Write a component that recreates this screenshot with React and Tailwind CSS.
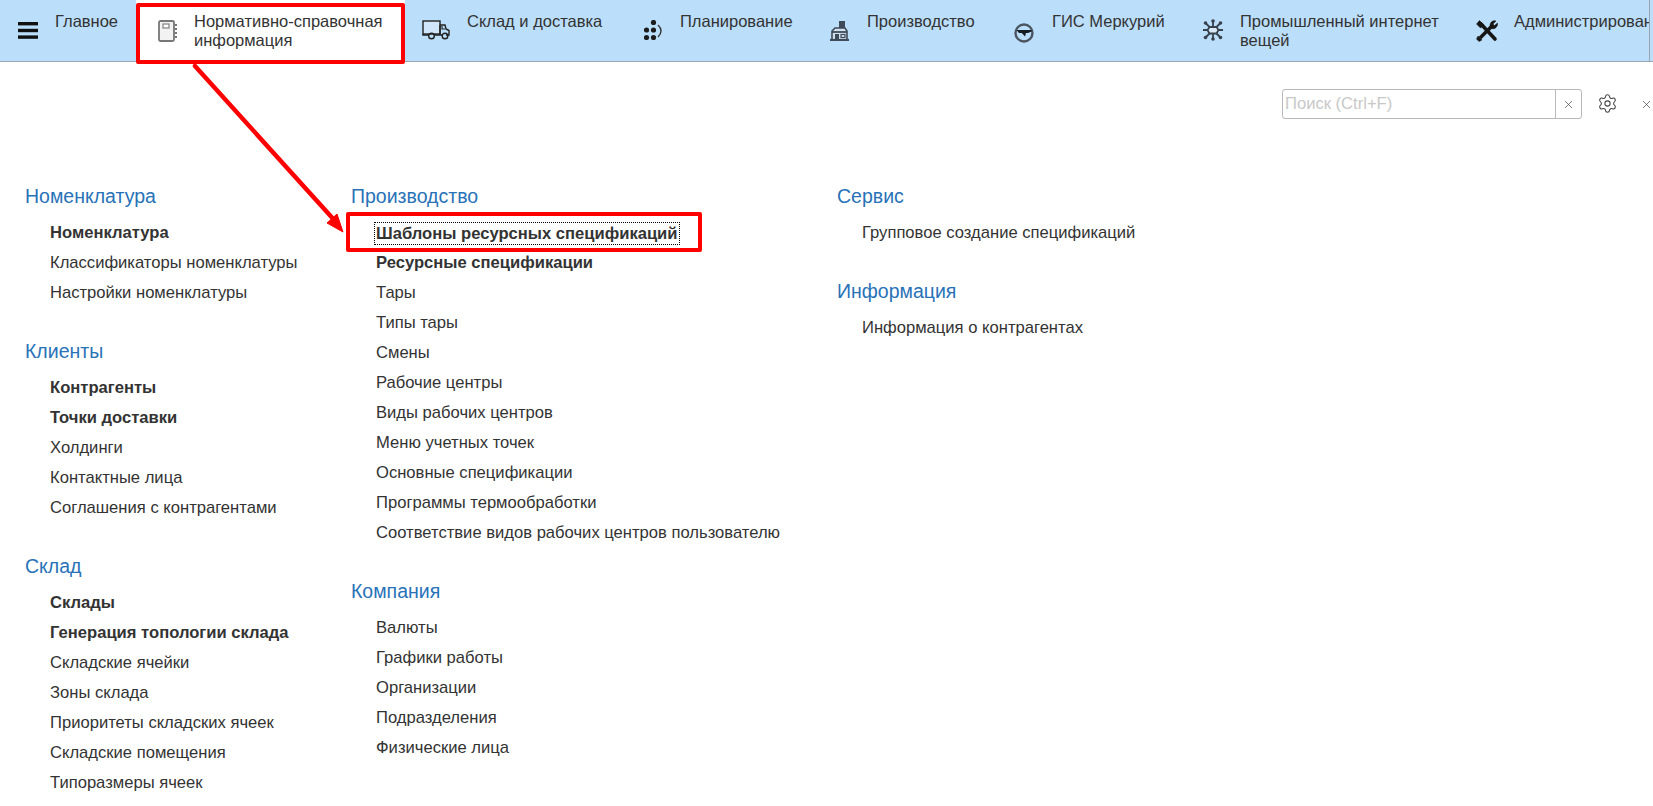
import { Settings, X } from "lucide-react";

const MenuIcon = () => (
  <svg width="20" height="17" viewBox="0 0 20 17" fill="#111">
    <rect x="0" y="0" width="20" height="3.4" />
    <rect x="0" y="6.8" width="20" height="3.4" />
    <rect x="0" y="13.4" width="20" height="3.4" />
  </svg>
);

const NotebookIcon = () => (
  <svg width="20" height="22" viewBox="0 0 20 22" fill="none">
    <rect x="1" y="1" width="15" height="20" rx="1.5" fill="#f2f2f2" stroke="#777" strokeWidth="1.8" />
    <rect x="5" y="4" width="6" height="4" fill="#fff" stroke="#888" strokeWidth="1.3" />
    <path d="M17 5h2M17 9h2M17 13h2M17 17h2" stroke="#777" strokeWidth="1.8" />
  </svg>
);

const TruckIcon = () => (
  <svg width="28" height="21" viewBox="0 0 28 21" fill="none" stroke="#222" strokeWidth="1.4">
    <rect x="1" y="1" width="17" height="13" fill="#cfe6fb" />
    <path d="M18 5h5l1 4 3 1.5V15h-3M18 5v10" />
    <path d="M20 6v3h3" strokeWidth="1.1" />
    <path d="M1 14v1h6M12 15h9" />
    <circle cx="9.5" cy="16" r="2.8" />
    <circle cx="23" cy="16" r="2.8" />
  </svg>
);

const PlanIcon = () => (
  <svg width="18" height="20" viewBox="0 0 18 20" fill="#1d1d1d">
    <circle cx="9.5" cy="2.5" r="2.6" />
    <circle cx="2.5" cy="10" r="2.6" />
    <circle cx="9.5" cy="10" r="2.6" />
    <circle cx="2.5" cy="17.5" r="2.6" />
    <circle cx="9.5" cy="17.5" r="2.6" />
    <path d="M14 5c4 3.5 4 8.5 0 12" fill="none" stroke="#333" strokeWidth="1.4" />
  </svg>
);

const FactoryIcon = () => (
  <svg width="19" height="21" viewBox="0 0 19 21" fill="none">
    <path d="M9 8V1h6v7z" fill="#3f4b58" />
    <path d="M2 11l3-3h10l2 3v9H2z" fill="#cfe0ef" stroke="#3f4b58" strokeWidth="1.6" />
    <path d="M2 12h15" stroke="#3f4b58" strokeWidth="1.8" />
    <path d="M0 20h19" stroke="#3f4b58" strokeWidth="2.2" />
    <rect x="5" y="14" width="4" height="6" fill="#3f4b58" />
    <rect x="11" y="14.5" width="4" height="3" stroke="#3f4b58" strokeWidth="1.2" />
  </svg>
);

const GisIcon = () => (
  <svg width="20" height="20" viewBox="0 0 20 20" fill="none">
    <circle cx="10" cy="10" r="8.5" stroke="#4a5560" strokeWidth="2.4" />
    <path d="M2.5 7h15v1.5l-3.5 1.5h-2l-1 3.5-3.2-3.5H5z" fill="#141c24" />
  </svg>
);

const IotIcon = () => (
  <svg width="20" height="22" viewBox="0 0 20 22" fill="none" stroke="#37424d" strokeWidth="1.8">
    <path d="M6.5 8h7l2 3-2 3.5h-7L4.5 11z" fill="#d8e8f6" />
    <path d="M10 8V2M10 14.5V20M6.5 8L2.5 4M13.5 8l4-4M6.5 14.5l-4 4M13.5 14.5l4 4M4.5 11H0M15.5 11H20" />
    <g fill="#37424d" stroke="none">
      <circle cx="10" cy="2" r="1.8" />
      <circle cx="10" cy="20" r="1.8" />
      <circle cx="2.5" cy="4" r="1.8" />
      <circle cx="17.5" cy="4" r="1.8" />
      <circle cx="2.5" cy="18.5" r="1.8" />
      <circle cx="17.5" cy="18.5" r="1.8" />
    </g>
  </svg>
);

const ToolsIcon = () => (
  <svg width="22" height="22" viewBox="0 0 22 22" fill="#161616" stroke="#161616">
    <path d="M5 4L19 19" strokeWidth="3.6" strokeLinecap="round" />
    <path d="M17 5L4 18" strokeWidth="3.6" />
    <path d="M0.5 4L3.5 0.5 8 5 4.5 8z" strokeWidth="0.5" />
    <path d="M14 5.5C14 2 17 0 20 1l-3 3 1.5 1.5 3-2.5c.6 3-2 6.5-6 5.5z" strokeWidth="0.5" />
    <path d="M2 16l4 4-3 1.5-2.5-2.5z" strokeWidth="0.5" />
  </svg>
);

const navItems = [
  { label: "Нормативно-справочная информация", box: "w-[269px] bg-white", icon: <NotebookIcon />, iconBox: "ml-[22px] mr-[16px] mt-[20px]", text: "w-[200px]" },
  { label: "Склад и доставка", box: "w-[222px]", icon: <TruckIcon />, iconBox: "ml-[17px] mr-[17px] mt-[20px]" },
  { label: "Планирование", box: "w-[185px]", icon: <PlanIcon />, iconBox: "ml-[17px] mr-[18px] mt-[20px]" },
  { label: "Производство", box: "w-[185px]", icon: <FactoryIcon />, iconBox: "ml-[18px] mr-[18px] mt-[20px]" },
  { label: "ГИС Меркурий", box: "w-[189px]", icon: <GisIcon />, iconBox: "ml-[17px] mr-[18px] mt-[23px]" },
  { label: "Промышленный интернет вещей", box: "w-[273px]", icon: <IotIcon />, iconBox: "ml-[17px] mr-[17px] mt-[19px]", text: "w-[210px]" },
  { label: "Администрирование", box: "w-[191px]", icon: <ToolsIcon />, iconBox: "ml-[17px] mr-[16px] mt-[20px]", text: "whitespace-nowrap" },
];

const columns = [
  {
    width: "w-[326px]",
    sections: [
      {
        title: "Номенклатура",
        items: [["Номенклатура", true], ["Классификаторы номенклатуры"], ["Настройки номенклатуры"]],
      },
      {
        title: "Клиенты",
        items: [["Контрагенты", true], ["Точки доставки", true], ["Холдинги"], ["Контактные лица"], ["Соглашения с контрагентами"]],
      },
      {
        title: "Склад",
        items: [
          ["Склады", true],
          ["Генерация топологии склада", true],
          ["Складские ячейки"],
          ["Зоны склада"],
          ["Приоритеты складских ячеек"],
          ["Складские помещения"],
          ["Типоразмеры ячеек"],
        ],
      },
    ],
  },
  {
    width: "w-[486px]",
    sections: [
      {
        title: "Производство",
        items: [
          ["Шаблоны ресурсных спецификаций", true, true],
          ["Ресурсные спецификации", true],
          ["Тары"],
          ["Типы тары"],
          ["Смены"],
          ["Рабочие центры"],
          ["Виды рабочих центров"],
          ["Меню учетных точек"],
          ["Основные спецификации"],
          ["Программы термообработки"],
          ["Соответствие видов рабочих центров пользователю"],
        ],
      },
      {
        title: "Компания",
        items: [["Валюты"], ["Графики работы"], ["Организации"], ["Подразделения"], ["Физические лица"]],
      },
    ],
  },
  {
    width: "w-[400px]",
    sections: [
      { title: "Сервис", items: [["Групповое создание спецификаций"]] },
      { title: "Информация", items: [["Информация о контрагентах"]] },
    ],
  },
];

const NavItem = ({ item }) => (
  <div className={`flex h-full shrink-0 items-start ${item.box}`}>
    <div className={`shrink-0 ${item.iconBox}`}>{item.icon}</div>
    <span className={`pt-[12px] text-[16.5px] leading-[19px] ${item.text || ""}`}>{item.label}</span>
  </div>
);

const Section = ({ section }) => (
  <div className="flex flex-col gap-[9px]">
    <h2 className="h-6 text-[19.5px] leading-[22px] font-normal text-[#2872b8]">{section.title}</h2>
    <ul className="flex flex-col pl-[25px]">
      {section.items.map(([name, bold, focused]) => (
        <li key={name} className={`flex h-[30px] items-center ${bold ? "font-bold" : ""}`}>
          {focused ? (
            <span className="-ml-[2px] border border-dotted border-black px-[1px] leading-[21px]">{name}</span>
          ) : (
            name
          )}
        </li>
      ))}
    </ul>
  </div>
);

export default function App() {
  return (
    <div className="relative h-[806px] w-full overflow-hidden bg-white font-['Liberation_Sans',Arial,sans-serif] text-[16.6px] text-[#333]">
      <header className="h-[62px] border-b border-[#9aa5b1] bg-[#bbdefa]">
        <div className="flex h-full w-[1650px] overflow-hidden border-r border-[#9aa5b1]">
          <div className="w-[55px] shrink-0 pl-[18px] pt-[22px]">
            <MenuIcon />
          </div>
          <span className="w-[81px] shrink-0 pt-[12px] text-[16.5px] leading-[19px]">Главное</span>
          {navItems.map((item) => (
            <NavItem key={item.label} item={item} />
          ))}
        </div>
      </header>

      <div className="mt-[27px] flex h-[30px] justify-end">
        <div className="flex w-[300px] rounded-[3px] border border-[#b8b8b8]">
          <span className="flex-1 pl-[2px] leading-[28px] text-[#c8c8c8]">Поиск (Ctrl+F)</span>
          <span className="flex w-[26px] items-center justify-center border-l border-[#b8b8b8]">
            <X size={13} strokeWidth={1.3} color="#444" />
          </span>
        </div>
        <Settings size={21} strokeWidth={1.2} color="#444" className="ml-[15px] mt-[4px]" />
        <X size={13} strokeWidth={1.3} color="#444" className="ml-[22px] mt-[9px]" />
      </div>

      <main className="mt-[66px] flex pl-[25px]">
        {columns.map((column) => (
          <div key={column.sections[0].title} className={`flex flex-col gap-8 ${column.width}`}>
            {column.sections.map((section) => (
              <Section key={section.title} section={section} />
            ))}
          </div>
        ))}
      </main>

      {/* annotation overlays */}
      <div className="absolute left-[136px] top-[3px] h-[61px] w-[269px] rounded-[2px] border-4 border-[#ff0000]" />
      <div className="absolute left-[346px] top-[212px] h-[40px] w-[356px] rounded-[2px] border-4 border-[#ff0000]" />
      <svg className="absolute left-[190px] top-[62px]" width="160" height="175" viewBox="0 0 160 175" fill="none">
        <path d="M5 4L146 160" stroke="#ff0000" strokeWidth="4.5" strokeLinecap="round" />
        <path d="M153 170L137 161L147 152Z" fill="#ff0000" stroke="#ff0000" />
      </svg>
    </div>
  );
}
